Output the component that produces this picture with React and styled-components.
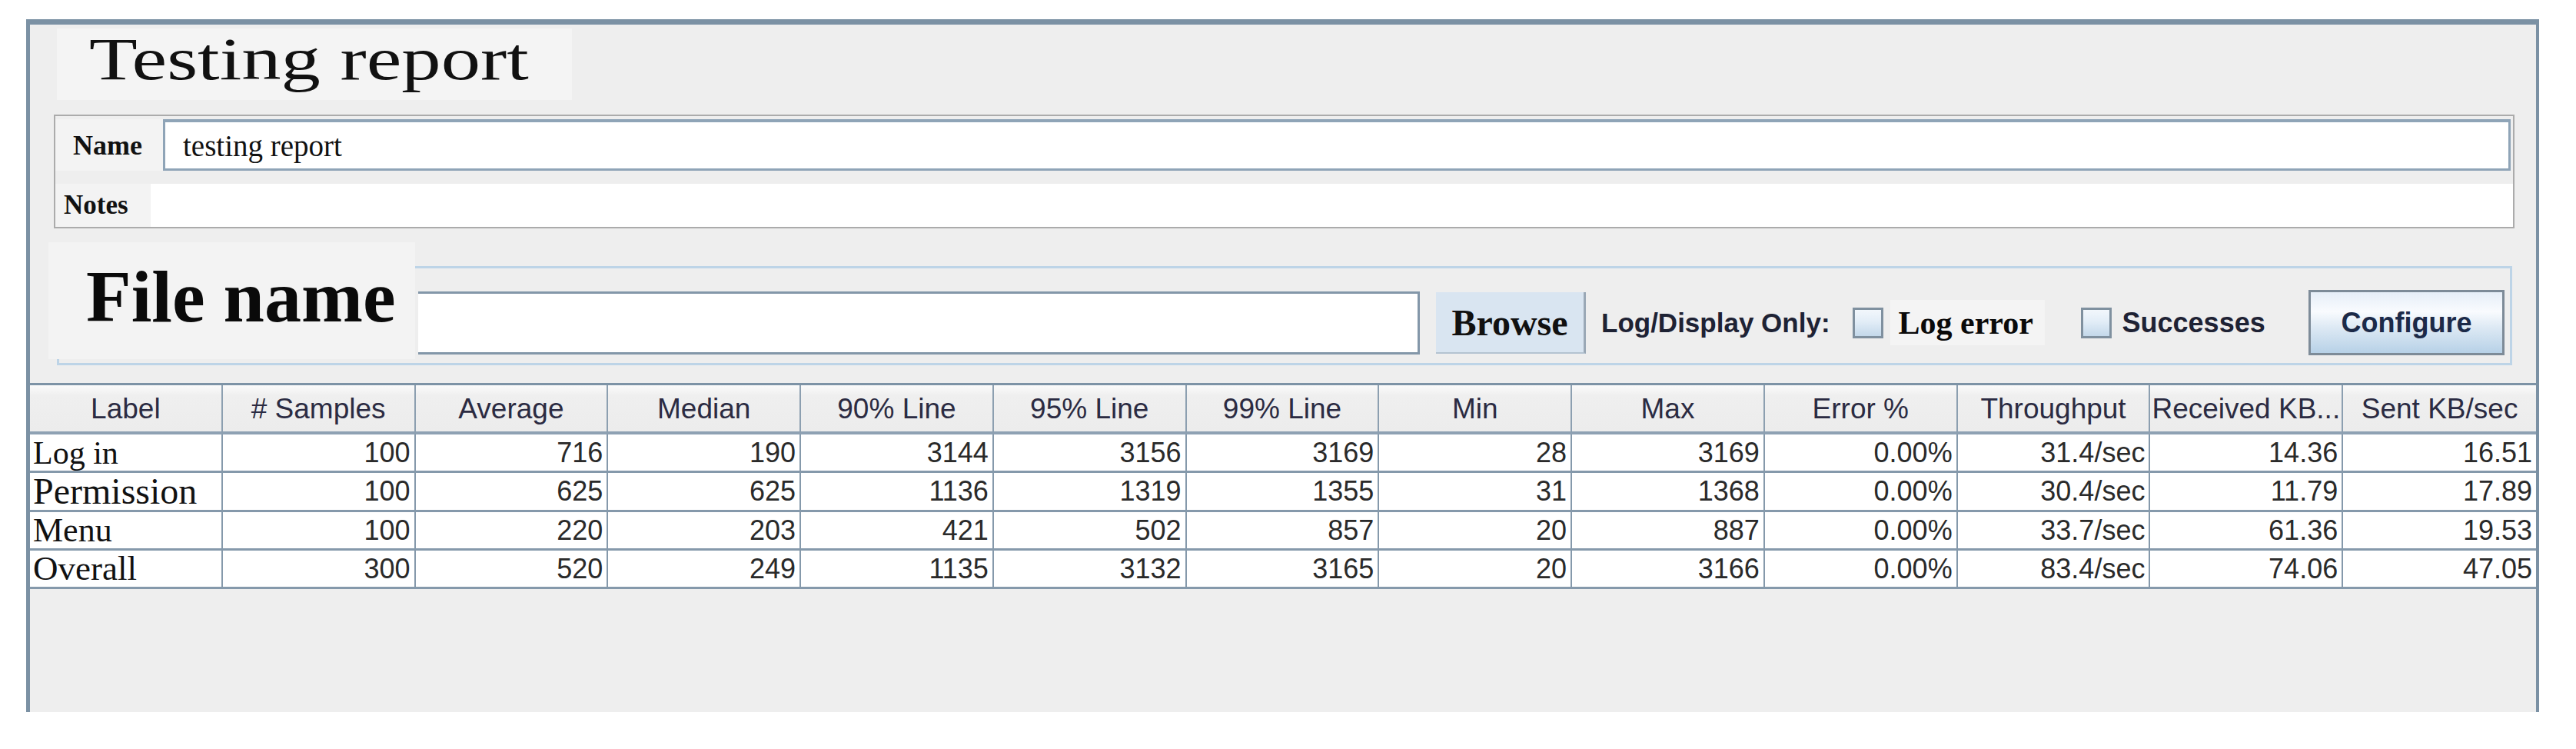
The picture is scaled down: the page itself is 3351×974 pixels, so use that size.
import styled, { createGlobalStyle } from 'styled-components';

const GlobalStyle = createGlobalStyle`
  html, body {
    margin: 0;
    padding: 0;
    background: #ffffff;
  }
  body {
    font-family: "Liberation Sans", Arial, sans-serif;
  }
  * {
    box-sizing: border-box;
  }
`;

const Page = styled.div`
  width: 3351px;
  height: 974px;
  padding: 25px 0 0 34px;
`;

const Frame = styled.div`
  width: 3269px;
  height: 901px;
  background: #eeeeee;
  border-top: 7px solid #7b91a4;
  border-left: 5px solid #7b91a4;
  border-right: 4px solid #7b91a4;
  display: flex;
  flex-direction: column;
  align-items: flex-start;
`;

const TitleBox = styled.div`
  margin: 5px 0 0 35px;
  width: 670px;
  height: 93px;
  padding: 0 0 0 42px;
  background: #f4f4f4;
`;

const TitleText = styled.span`
  display: inline-block;
  font-family: "Liberation Serif", "Times New Roman", serif;
  font-size: 79px;
  line-height: 1;
  color: #111;
  transform: scaleX(1.3);
  transform-origin: left center;
`;

const InfoPanel = styled.div`
  margin: 19px 0 0 31px;
  width: 3201px;
  border: 2px solid #ababab;
  padding-top: 4px;
`;

const InfoRow = styled.div`
  display: flex;
  align-items: stretch;
  height: ${p => p.$h}px;
  margin-top: ${p => p.$gap || 0}px;
`;

const InfoLabel = styled.div`
  width: ${p => p.$w}px;
  padding-left: ${p => p.$pad}px;
  display: flex;
  align-items: center;
  background: #f3f3f3;
  font-family: "Liberation Serif", "Times New Roman", serif;
  font-weight: 700;
  font-size: ${p => p.$size}px;
  color: #111;
`;

const NameField = styled.div`
  flex: 1;
  margin-right: 3px;
  background: #ffffff;
  border: 3px solid #8fa4b7;
  border-top-width: 4px;
  display: flex;
  align-items: center;
  padding-left: 23px;
  font-family: "Liberation Serif", "Times New Roman", serif;
  font-size: 39px;
  color: #111;
`;

const NotesArea = styled.div`
  flex: 1;
  background: #ffffff;
`;

const FileGroup = styled.div`
  margin: 49px 0 0 35px;
  width: 3194px;
  height: 129px;
  border: 3px solid #bdd4e7;
  display: flex;
  align-items: flex-start;
`;

const FileLabel = styled.div`
  margin: -34px 0 0 -14px;
  width: 477px;
  height: 152px;
  flex-shrink: 0;
  padding: 23px 0 0 49px;
  background: #f3f3f3;
  font-family: "Liberation Serif", "Times New Roman", serif;
  font-weight: 700;
  font-size: 96px;
  line-height: 1;
  color: #0a0a0a;
  white-space: nowrap;
`;

const Controls = styled.div`
  flex: 1;
  margin-top: 28px;
  height: 85px;
  display: flex;
  align-items: center;
`;

const FileInput = styled.div`
  margin-left: 4px;
  width: 1303px;
  height: 82px;
  background: #ffffff;
  border: 3px solid #8397a9;
  border-left: none;
`;

const BrowseButton = styled.div`
  margin-left: 21px;
  width: 195px;
  height: 80px;
  background: #d9e5f1;
  border-right: 3px solid #9aa8b6;
  border-bottom: 2px solid #b4c3d1;
  display: flex;
  align-items: flex-end;
  justify-content: center;
  padding-bottom: 14px;
  font-family: "Liberation Serif", "Times New Roman", serif;
  font-weight: 700;
  font-size: 48px;
  line-height: 1;
  color: #111;
`;

const SansLabel = styled.span`
  margin-left: ${p => p.$ml}px;
  font-family: "Liberation Sans", Arial, sans-serif;
  font-weight: 700;
  font-size: ${p => p.$size}px;
  color: #1e2234;
  white-space: nowrap;
`;

const Checkbox = styled.span`
  margin-left: ${p => p.$ml}px;
  width: 40px;
  height: 40px;
  flex-shrink: 0;
  border: 3px solid #7f909f;
  background: linear-gradient(180deg, #f2f7fc 0%, #e2edf7 45%, #c3d8ea 100%);
`;

const SerifOption = styled.span`
  margin-left: 9px;
  width: 201px;
  height: 59px;
  padding-left: 11px;
  display: flex;
  align-items: center;
  background: #f4f4f4;
  font-family: "Liberation Serif", "Times New Roman", serif;
  font-weight: 700;
  font-size: 42px;
  color: #0a0a0a;
  white-space: nowrap;
`;

const ConfigureButton = styled.div`
  margin: 0 7px 0 auto;
  width: 255px;
  height: 85px;
  border: 3px solid #7d8b98;
  background: linear-gradient(180deg, #e6eef8 0%, #f9fbfe 32%, #dde9f4 58%, #b7d1e7 100%);
  display: flex;
  align-items: center;
  justify-content: center;
  font-family: "Liberation Sans", Arial, sans-serif;
  font-weight: 700;
  font-size: 36px;
  color: #1c2a48;
`;

const Table = styled.table`
  margin-top: 23px;
  width: 100%;
  table-layout: fixed;
  border-collapse: separate;
  border-spacing: 0;
  border-top: 3px solid #7d93a6;
`;

const HeadCell = styled.th`
  height: 64px;
  padding: 0;
  background: linear-gradient(180deg, #fbfbfb 0%, #efefef 22%, #ececec 100%);
  border-right: 2px solid #8c9fb0;
  border-bottom: 4px solid #8ea1b3;
  font-family: "Liberation Sans", Arial, sans-serif;
  font-weight: 400;
  font-size: 37px;
  line-height: 1;
  color: #2b2b42;
  text-align: center;
  white-space: nowrap;
  overflow: hidden;
  &:last-child {
    border-right: none;
  }
`;

const Cell = styled.td`
  height: 50px;
  padding: 0 5px 0 0;
  background: #ffffff;
  border-right: 2px solid #8599ab;
  border-bottom: 3px solid #8599ab;
  font-family: "Liberation Sans", Arial, sans-serif;
  font-size: 36px;
  line-height: 1;
  color: #2a2a2a;
  text-align: right;
  vertical-align: middle;
  white-space: nowrap;
  &:last-child {
    border-right: none;
  }
`;

const LabelCell = styled(Cell)`
  padding: 0 0 0 4px;
  font-family: "Liberation Serif", "Times New Roman", serif;
  font-size: ${p => p.$size}px;
  color: #111;
  text-align: left;
`;

const columns = [
  'Label', '# Samples', 'Average', 'Median', '90% Line', '95% Line', '99% Line',
  'Min', 'Max', 'Error %', 'Throughput', 'Received KB...', 'Sent KB/sec',
];

const rows = [
  { label: 'Log in', size: 42, values: ['100', '716', '190', '3144', '3156', '3169', '28', '3169', '0.00%', '31.4/sec', '14.36', '16.51'] },
  { label: 'Permission', size: 48, values: ['100', '625', '625', '1136', '1319', '1355', '31', '1368', '0.00%', '30.4/sec', '11.79', '17.89'] },
  { label: 'Menu', size: 44, values: ['100', '220', '203', '421', '502', '857', '20', '887', '0.00%', '33.7/sec', '61.36', '19.53'] },
  { label: 'Overall', size: 45, values: ['300', '520', '249', '1135', '3132', '3165', '20', '3166', '0.00%', '83.4/sec', '74.06', '47.05'] },
];

const App = () => {
  return (
    <>
      <GlobalStyle />
      <Page>
        <Frame>
          <TitleBox>
            <TitleText>Testing report</TitleText>
          </TitleBox>

          <InfoPanel>
            <InfoRow $h={67}>
              <InfoLabel $w={140} $pad={23} $size={36}>Name</InfoLabel>
              <NameField>testing report</NameField>
            </InfoRow>
            <InfoRow $h={56} $gap={17}>
              <InfoLabel $w={124} $pad={11} $size={35}>Notes</InfoLabel>
              <NotesArea />
            </InfoRow>
          </InfoPanel>

          <FileGroup>
            <FileLabel>File name</FileLabel>
            <Controls>
              <FileInput />
              <BrowseButton>Browse</BrowseButton>
              <SansLabel $ml={20} $size={35}>Log/Display Only:</SansLabel>
              <Checkbox $ml={29} />
              <SerifOption>Log error</SerifOption>
              <Checkbox $ml={47} />
              <SansLabel $ml={14} $size={36}>Successes</SansLabel>
              <ConfigureButton>Configure</ConfigureButton>
            </Controls>
          </FileGroup>

          <Table>
            <thead>
              <tr>
                {columns.map(c => (
                  <HeadCell key={c}>{c}</HeadCell>
                ))}
              </tr>
            </thead>
            <tbody>
              {rows.map(r => (
                <tr key={r.label}>
                  <LabelCell $size={r.size}>{r.label}</LabelCell>
                  {r.values.map((v, i) => (
                    <Cell key={i}>{v}</Cell>
                  ))}
                </tr>
              ))}
            </tbody>
          </Table>
        </Frame>
      </Page>
    </>
  );
};

export default App;
